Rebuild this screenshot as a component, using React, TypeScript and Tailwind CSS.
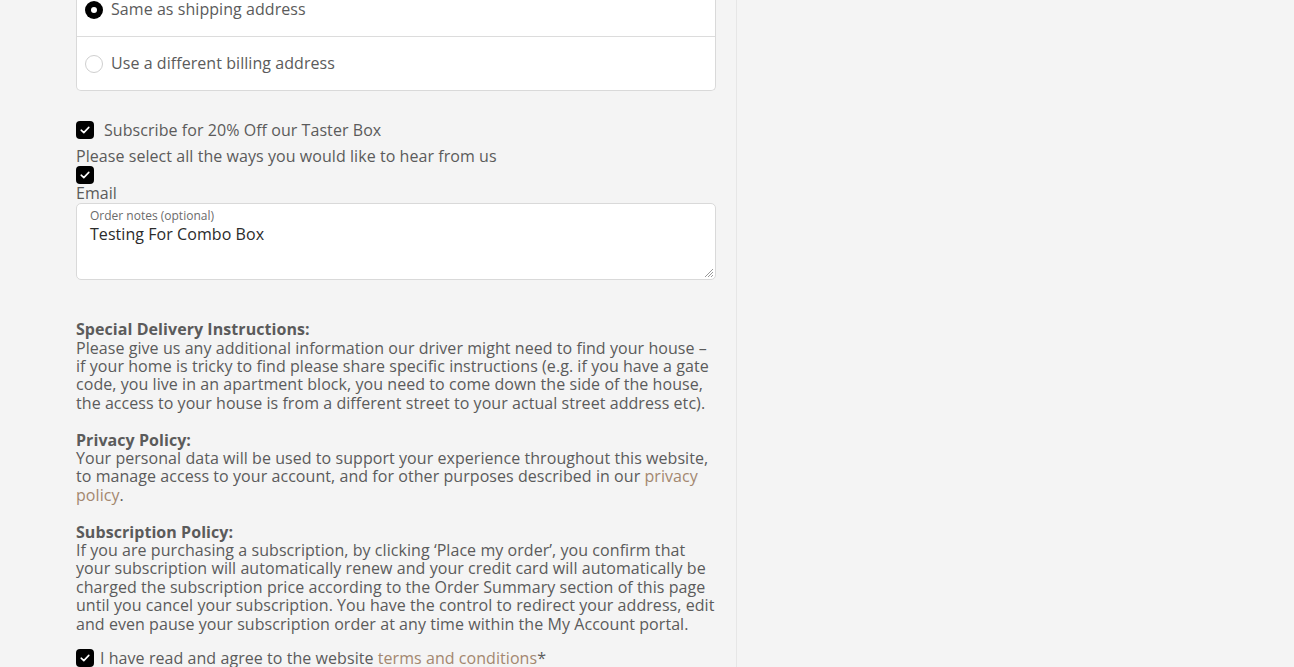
import React from "react";

function Check() {
  return (
    <span className="flex h-[18px] w-[18px] shrink-0 items-center justify-center rounded-[4px] bg-black">
      <svg width="10" height="8" viewBox="0 0 10 8" fill="none">
        <path d="M1.2 4.2 L3.8 6.6 L8.8 1.4" stroke="white" strokeWidth="1.6" strokeLinecap="round" strokeLinejoin="round" />
      </svg>
    </span>
  );
}

export default function App() {
  return (
    <div
      className="flex min-h-[667px] w-full overflow-hidden bg-[#f4f4f4] text-[16px] leading-[18.4px] tracking-[0.06px] text-[#5b5b5b]"
      style={{ fontFamily: '"Open Sans", "Liberation Sans", sans-serif' }}
    >
      <div className="w-[737px] shrink-0 border-r border-[#e6e6e6] pl-[76px] pr-[20px]">
        {/* billing address radios */}
        <div className="-mt-[17px] rounded-b-[5px] border border-t-0 border-[#d9d9d9] bg-white">
          <label className="flex h-[54px] items-center gap-[8px] border-b border-[#dcdcdc] px-[8px]">
            <span className="flex h-[18px] w-[18px] items-center justify-center rounded-full bg-black">
              <span className="h-[6px] w-[6px] rounded-full bg-white" />
            </span>
            <span>Same as shipping address</span>
          </label>
          <label className="flex h-[53px] items-center gap-[8px] px-[8px]">
            <span className="h-[18px] w-[18px] rounded-full border border-[#cfcfcf] bg-white" />
            <span>Use a different billing address</span>
          </label>
        </div>

        <div className="mt-[30px] flex items-center gap-[10px]">
          <Check />
          <span>Subscribe for 20% Off our Taster Box</span>
        </div>
        <p className="mt-[8px]">Please select all the ways you would like to hear from us</p>
        <div>
          <Check />
        </div>
        <p>Email</p>

        <div className="relative mt-[1px] h-[77px] rounded-[5px] border border-[#d9d9d9] bg-white px-[13px] pt-[4px]">
          <p className="text-[12px] leading-[15px] tracking-normal text-[#6b6b6b]">Order notes (optional)</p>
          <p className="mt-[2px] text-[#2b2b2b]">Testing For Combo Box</p>
          <svg className="absolute bottom-[1px] right-[1px]" width="12" height="12" viewBox="0 0 12 12">
            <path d="M11 3 L3 11 M11 6 L6 11 M11 9 L9 11" stroke="#9a9a9a" strokeWidth="1" />
          </svg>
        </div>

        <div className="mt-[40px]">
          <p className="font-bold">Special Delivery Instructions:</p>
          <p>
            Please give us any additional information our driver might need to find your house – if your home is
            tricky to find please share specific instructions (e.g. if you have a gate code, you live in an apartment
            block, you need to come down the side of the house, the access to your house is from a different street to
            your actual street address etc).
          </p>
          <p className="mt-[18.4px] font-bold">Privacy Policy:</p>
          <p>
            Your personal data will be used to support your experience throughout this website, to manage access to
            your account, and for other purposes described in our{" "}
            <a className="text-[#a3876f]">privacy policy</a>.
          </p>
          <p className="mt-[18.4px] font-bold">Subscription Policy:</p>
          <p>
            If you are purchasing a subscription, by clicking ‘Place my order’, you confirm that your subscription will
            automatically renew and your credit card will automatically be charged the subscription price according to
            the Order Summary section of this page until you cancel your subscription. You have the control to redirect
            your address, edit and even pause your subscription order at any time within the My Account portal.
          </p>
        </div>

        <div className="mt-[16px] flex items-center gap-[6px]">
          <Check />
          <span>
            I have read and agree to the website <a className="text-[#a3876f]">terms and conditions</a>*
          </span>
        </div>
      </div>
      <div className="flex-1" />
    </div>
  );
}
